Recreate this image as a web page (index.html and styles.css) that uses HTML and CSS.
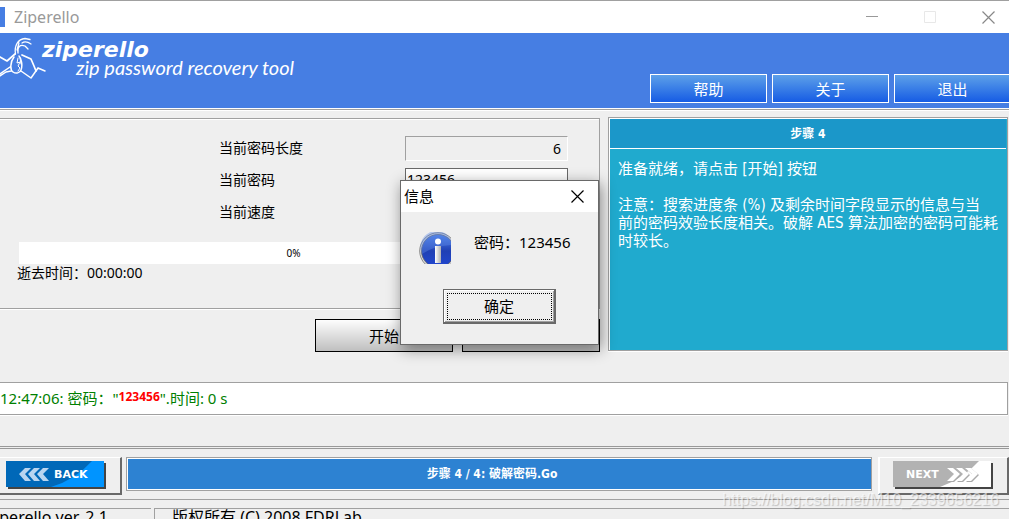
FILE: index.html
```html
<!DOCTYPE html>
<html lang="zh-CN">
<head>
<meta charset="utf-8">
<title>Ziperello</title>
<link rel="stylesheet" href="styles.css">
</head>
<body>
<div class="window">
  <header class="titlebar">
    <span class="app-icon"></span>
    <h1 class="title">Ziperello</h1>
    <div class="window-controls">
      <button class="window-button" aria-label="最小化"><svg width="13" height="13" viewBox="0 0 13 13"><path d="M0 5.5H12" stroke="#999"/></svg></button>
      <button class="window-button" aria-label="最大化" disabled><svg width="13" height="13" viewBox="0 0 13 13"><path d="M.5 .5H11.5V11.5H.5Z" fill="none" stroke="#e8e8e8"/></svg></button>
      <button class="window-button" aria-label="关闭"><svg width="13" height="13" viewBox="0 0 13 13"><path d="M.5 .5L12.5 12.5M12.5 .5L.5 12.5" stroke="#888" stroke-width="1.2"/></svg></button>
    </div>
  </header>

  <section class="banner">
    <svg class="figure" width="46" height="46" viewBox="0 0 46 46" fill="none" stroke="#fff" stroke-linecap="round" stroke-linejoin="round">
      <path stroke-width="1.3" d="M15.5 19C14 11 18 4 25 3.500L30 4.500M18 18C17 12 20 9 25 11L28 14M22 8C25 6 28 7 31 9M17 15L19 8"/>
      <path stroke-width="1.7" d="M15 19L7 26L0 22M22 20L31 24L34 31L36 36"/>
      <path stroke-width="1.5" d="M14 22C10 27 10 35 13 37C16 39 20 38 21 35C23 30 21 23 19 21M10 32L0 39M11 36L6 37L0 41M21 36L31 43L38 33L45 36M38 33L36 36"/>
      <path stroke-width="1" d="M18 23L17 28L20 27L18 31L20 33L18 36M20 23L21 29"/>
    </svg>
    <div class="brand">
      <span class="brand-name">ziperello</span>
      <span class="brand-tag">zip password recovery tool</span>
    </div>
    <nav class="menu">
      <button class="menu-button">帮助</button>
      <button class="menu-button">关于</button>
      <button class="menu-button">退出</button>
    </nav>
  </section>

  <main class="workspace">
    <div class="recovery">
      <section class="status-panel">
        <div class="fields">
          <label class="label" for="length">当前密码长度</label>
          <input class="field field-flat" id="length" value="6" readonly>
          <label class="label" for="password">当前密码</label>
          <input class="field" id="password" value="123456">
          <label class="label" for="speed">当前速度</label>
          <input class="field field-flat" id="speed" readonly>
        </div>
        <div class="progress" role="progressbar" aria-valuenow="0">0%</div>
        <p class="elapsed">逝去时间：00:00:00</p>
      </section>
      <div class="actions">
        <button class="action-button">开始</button>
        <button class="action-button" aria-label="停止"></button>
      </div>
    </div>
    <aside class="help">
      <h2 class="help-title">步骤 4</h2>
      <div class="help-text">
        <p>准备就绪，请点击 [开始] 按钮</p>
        <p>注意：搜索进度条 (%) 及剩余时间字段显示的信息与当<br>前的密码效验长度相关。破解 AES 算法加密的密码可能耗时较长。</p>
      </div>
    </aside>
  </main>

  <div class="log">12:47:06: 密码："<strong class="found">123456</strong>".时间: 0 s</div>

  <footer class="wizard">
    <button class="step-button" aria-label="Back">
      <svg width="104" height="33" viewBox="0 0 104 33">
        <path d="M3 3H101V29H3Z" fill="#444"/>
        <path d="M1 1H99V27H1Z" fill="#0068b8"/>
        <path d="M99 1V27H46Q70 20 87 1Z" fill="#0094ff"/>
        <g fill="#b9d5f0"><path d="M14 14L20 8H26L20 14L26 21H20Z"/><path d="M23 14L29 8H35L29 14L35 21H29Z"/><path d="M32 14L38 8H44L38 14L44 21H38Z"/></g>
        <text class="step-text" x="49" y="18">BACK</text>
      </svg>
    </button>
    <div class="step-status">步骤 4 / 4: 破解密码.Go</div>
    <button class="step-button step-next" aria-label="Next" disabled>
      <svg width="104" height="33" viewBox="0 0 104 33">
        <path d="M4 3H102V29H4Z" fill="#444"/>
        <path d="M2 1H100V27H2Z" fill="#b2b2b2"/>
        <path d="M100 1V27H49Q72 19 88 1Z" fill="#fff"/>
        <g fill="#aaa"><path d="M57 9H63L70 15L63 22H57L64 15Z"/><path d="M66 9H72L79 15L72 22H66L73 15Z"/><path d="M75 9H81L88 15L81 22H75L82 15Z"/></g>
        <g fill="#fff"><path d="M56 8H62L69 14L62 21H56L63 14Z"/><path d="M65 8H71L78 14L71 21H65L72 14Z"/><path d="M74 8H80L87 14L80 21H74L81 14Z"/></g>
        <text class="step-text" x="15" y="18">NEXT</text>
      </svg>
    </button>
  </footer>

  <div class="statusbar">
    <div class="status-cell status-version">Ziperello ver. 2.1</div>
    <div class="status-cell">版权所有 (C) 2008 FDRLab</div>
  </div>

  <section class="dialog" role="dialog" aria-labelledby="dialog-title">
    <div class="dialog-head">
      <h2 class="dialog-title" id="dialog-title">信息</h2>
      <button class="dialog-close" aria-label="关闭"><svg width="13" height="13" viewBox="0 0 13 13"><path d="M.5 .5L12.5 12.5M12.5 .5L.5 12.5" stroke="#000" stroke-width="1.2"/></svg></button>
    </div>
    <div class="dialog-message">
      <svg width="32" height="32" viewBox="0 0 32 32">
        <defs>
          <linearGradient id="ball" x1="0" y1="0" x2="0" y2="1"><stop offset="0" stop-color="#4c80e8"/><stop offset=".5" stop-color="#2040b4"/><stop offset="1" stop-color="#2147d2"/></linearGradient>
          <linearGradient id="stem"><stop offset="0" stop-color="#fff"/><stop offset="1" stop-color="#b0b0b0"/></linearGradient>
        </defs>
        <circle cx="19" cy="19" r="18.3" fill="#ddd" stroke="#888"/>
        <circle cx="19" cy="19" r="16.5" fill="url(#ball)" stroke="#666" stroke-width=".8"/>
        <path d="M3 22A16 16 0 0 1 32 8V13Q14 14 3 22Z" fill="#5f8ce8" opacity=".4"/>
        <circle cx="19" cy="9.5" r="3" fill="#fff"/>
        <path d="M16 14H22V31H16Z" fill="url(#stem)"/>
      </svg>
      <p>密码：123456</p>
    </div>
    <button class="dialog-ok">确定</button>
  </section>
  <div class="watermark">https://blog.csdn.net/M10_2339656216</div>
</div>
</body>
</html>
```
FILE: styles.css
```css
* { box-sizing: border-box; }

body {
  margin: 0;
  overflow: hidden;
  background: #efefef;
  color: #000;
  font: 14px/18px "Noto Sans", "Noto Sans CJK SC", sans-serif;
}

h1, h2, p { margin: 0; font-weight: normal; }
button, input { font: inherit; color: inherit; padding: 0; }
svg { display: block; flex: none; }

.window {
  position: relative;
  height: 100vh;
  overflow: hidden;
}

.titlebar {
  display: flex;
  align-items: center;
  height: 33px;
  border-top: 1px solid #a0a0a0;
  background: #fff;
}
.app-icon { width: 5px; height: 20px; background: #467ee3; }
.title { margin-left: 9px; color: #999; font-size: 16px; }
.window-controls { display: flex; margin: 0 -8px 0 auto; }
.window-button {
  display: flex;
  justify-content: center;
  align-items: center;
  width: 58px;
  height: 30px;
  border: 0;
  background: none;
}

.banner {
  display: flex;
  height: 77px;
  border-bottom: 1px solid #a0a0a0;
  background: #467ee3;
  box-shadow: inset 0 -1px #fff, 0 1px #fff;
}
.figure { margin-top: 2px; }
.brand { margin-top: 7px; color: #fff; }
.brand-name, .brand-tag { display: block; white-space: nowrap; }
.brand-name { margin-left: -4px; font: italic bold 22px/20px "DejaVu Sans", sans-serif; }
.brand-tag { margin-left: 30px; font: italic 20px/14px Lato, sans-serif; }
.menu {
  display: flex;
  gap: 5px;
  align-items: flex-end;
  margin: 0 -2px 6px auto;
}
.menu-button {
  width: 117px;
  height: 29px;
  border: 1px solid #fff;
  background: linear-gradient(#5da0e9, #165ce4);
  color: #fff;
  font-size: 15px;
}

.workspace {
  display: grid;
  grid-template-columns: 3fr 2fr;
  gap: 8px;
  padding: 7px 1px 0 0;
}
.status-panel {
  height: 191px;
  margin-top: 1px;
  padding: 17px 31px 0 0;
  border: solid #a0a0a0;
  border-width: 1px 1px 1px 0;
  box-shadow: inset 0 1px #fff, 0 1px #fff;
}
.fields {
  display: grid;
  grid-template-columns: 186px 163px;
  grid-auto-rows: 25px;
  row-gap: 7px;
  justify-content: end;
  align-items: center;
}
.label { padding-bottom: 2px; }
.field {
  width: 100%;
  height: 25px;
  padding: 0 1px 2px;
  border: 1px solid #696969;
  background: #fff;
}
.field-flat {
  padding: 0 6px 0 2px;
  border-color: #a0a0a0 #fff #fff #a0a0a0;
  background: #efefef;
  text-align: right;
}
.progress {
  height: 22px;
  margin: 17px 0 0 19px;
  background: #fff;
  font-size: 10px;
  line-height: 23px;
  text-align: center;
}
.elapsed { margin-left: 17px; }
.actions {
  display: flex;
  justify-content: flex-end;
  gap: 9px;
  margin-top: 10px;
}
.action-button {
  width: 138px;
  height: 33px;
  border: 1px solid #000;
  background: linear-gradient(#fdfdfd, #bfbfbf);
  font-size: 15px;
}

.help {
  height: 234px;
  border: 1px solid #a0a0a0;
  background: #20aace;
  box-shadow: inset 1px 1px #fff, 0 1px #fff;
  color: #fff;
  font: 15px/18px "DejaVu Sans Condensed", "Noto Sans CJK SC", sans-serif;
}
.help-title {
  height: 30px;
  margin: 1px 1px 0;
  border-bottom: 1px solid #fff;
  background: #1b97c9;
  font-size: 12px;
  font-weight: bold;
  line-height: 30px;
  text-align: center;
}
.help-text { padding: 11px 4px 0 9px; }
.help-text p + p { margin-top: 18px; }

.log {
  height: 33px;
  margin: 30px 1px 0 0;
  border: solid #a0a0a0;
  border-width: 1px 1px 1px 0;
  background: #fff;
  box-shadow: 0 1px #fff;
  color: #008000;
  font-size: 15px;
  line-height: 30px;
}
.found { color: #f00; font-size: 12px; line-height: 12px; vertical-align: 3px; }

.wizard {
  display: flex;
  align-items: flex-start;
  gap: 4px;
  height: 54px;
  margin-top: 31px;
  padding-top: 8px;
  border-top: 3px double #999;
  border-bottom: 1px solid #a0a0a0;
}
.step-button {
  display: flex;
  justify-content: flex-end;
  width: 122px;
  height: 38px;
  padding: 2px 11px 0 0;
  border: solid #696969;
  border-width: 1px 2px 2px 0;
  border-top-color: #fff;
  background: #efefef;
}
.step-next {
  justify-content: flex-start;
  width: 131px;
  margin-left: 2px;
  padding: 2px 0 0 11px;
  border-left: 2px solid #fff;
}
.step-text {
  fill: #fff;
  font: bold 11px "DejaVu Sans", sans-serif;
}
.step-status {
  flex: 1;
  height: 34px;
  padding-right: 14px;
  border: 1px solid #a0a0a0;
  background: #2d82d2;
  box-shadow: inset 1px 1px #fff, inset 0 -1px #fff;
  color: #fff;
  font: bold 12px/32px "DejaVu Sans Condensed", "Noto Sans CJK SC", sans-serif;
  text-align: center;
}

.statusbar {
  display: flex;
  gap: 3px;
  margin-top: 8px;
  font-size: 16px;
  line-height: 16px;
}
.status-cell {
  flex: 1;
  height: 22px;
  padding-left: 17px;
  border: solid #a0a0a0;
  border-width: 1px 0 0 1px;
  white-space: nowrap;
}
.status-version {
  flex: none;
  width: 172px;
  margin-left: -21px;
  padding-left: 6px;
}

.dialog {
  position: absolute;
  left: 400px;
  top: 180px;
  width: 199px;
  height: 165px;
  border: 1px solid #696969;
  background: #efefef;
  box-shadow: 2px 4px 14px rgba(0, 0, 0, .45);
  font-size: 15px;
}
.dialog-head {
  display: flex;
  align-items: center;
  justify-content: space-between;
  height: 31px;
  padding: 0 14px 0 3px;
  background: #fff;
}
.dialog-title { padding-bottom: 2px; font-size: 15px; }
.dialog-close { border: 0; background: none; }
.dialog-message {
  display: flex;
  gap: 23px;
  padding: 20px 0 0 18px;
  line-height: 20px;
  white-space: nowrap;
}
.dialog-ok {
  display: block;
  width: 113px;
  height: 35px;
  margin: 25px 0 0 42px;
  border: solid #696969;
  border-width: 1px 2px 2px 1px;
  outline: 1px dotted #000;
  outline-offset: -5px;
  background: #efefef;
  box-shadow: inset 1px 1px #fff, inset -1px -1px #a0a0a0;
}

.watermark {
  position: absolute;
  right: 10px;
  bottom: 9px;
  color: rgba(255, 255, 255, .6);
  font: 16px/20px "Liberation Sans", sans-serif;
  text-shadow: 1px 1px 1px rgba(0, 0, 0, .2);
}
```
